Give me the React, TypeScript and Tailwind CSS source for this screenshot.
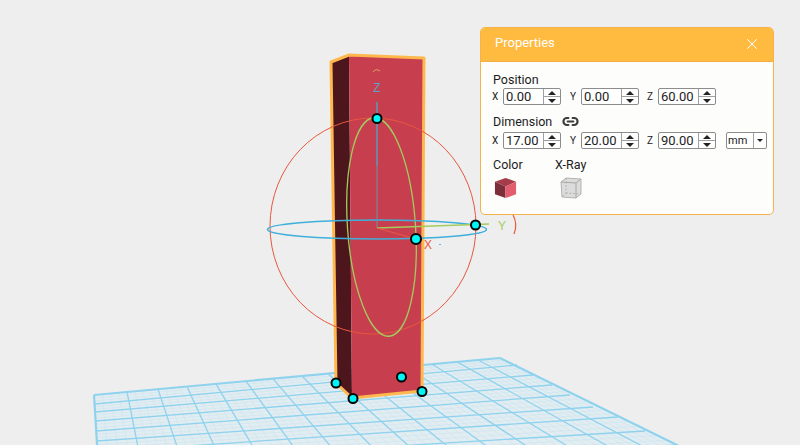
import { Link2, X } from "lucide-react";

// far edge of the build plate, one point per major column line
const topXs = [94, 127, 158, 187, 216, 246, 273, 302, 328, 354, 380, 406, 432, 457, 478, 500];
// [y on the left edge, x and y on the right edge]
const rows = [
  [395, 500, 358],
  [404, 517, 365],
  [412, 533, 375],
  [421, 552, 385],
  [431, 570, 395],
  [441, 593, 407],
  [452, 618, 417],
  [464, 645, 431],
  [477, 677, 445],
];

const vp = { x: 79, y: 151 };
const farY = (x: number) => 395 - ((x - 94) * 37) / 406;

function columnLine(x: number) {
  const y = farY(x);
  const endY = 470;
  const endX = vp.x + ((x - vp.x) * (endY - vp.y)) / (y - vp.y);
  return { x1: x, y1: y, x2: endX, y2: endY };
}

function leftX(y: number) {
  return 94 + (y - 395) * 0.06;
}

function BuildPlate() {
  const minorCols: number[] = [];
  topXs.slice(0, -1).forEach((x, i) => {
    for (let k = 1; k < 4; k++) minorCols.push(x + ((topXs[i + 1] - x) * k) / 4);
  });
  const minorRows: number[][] = [];
  rows.slice(0, -1).forEach((r, i) => {
    const n = rows[i + 1];
    for (let k = 1; k < 3; k++) {
      const t = k / 3;
      minorRows.push([r[0] + (n[0] - r[0]) * t, r[1] + (n[1] - r[1]) * t, r[2] + (n[2] - r[2]) * t]);
    }
  });
  return (
    <g>
      <polygon points="94,395 500,358 690,451 98,460" fill="#e2edf2" />
      {minorCols.map((x, i) => (
        <line key={i} {...columnLine(x)} stroke="#cde4ef" strokeWidth="0.6" />
      ))}
      {minorRows.map((r, i) => (
        <line key={i} x1={leftX(r[0])} y1={r[0]} x2={r[1]} y2={r[2]} stroke="#cde4ef" strokeWidth="0.6" />
      ))}
      {topXs.map((x, i) => (
        <line key={i} {...columnLine(x)} stroke="#8fd2ee" strokeWidth={i === 0 || i === topXs.length - 1 ? 2.2 : 1.3} />
      ))}
      {rows.map((r, i) => (
        <line key={i} x1={leftX(r[0])} y1={r[0]} x2={r[1]} y2={r[2]} stroke="#8fd2ee" strokeWidth={i === 0 ? 2.2 : 1.3} />
      ))}
    </g>
  );
}

function Handle({ x, y, r = 4.5 }: { x: number; y: number; r?: number }) {
  return <circle cx={x} cy={y} r={r} fill="#00f6f6" stroke="#050505" strokeWidth="2" />;
}

function Scene() {
  return (
    <svg className="absolute inset-0" width="800" height="445" viewBox="0 0 800 445">
      <BuildPlate />

      {/* selected box */}
      <polygon points="331,62 349,55 352,398 336,383" fill="#4d161d" />
      <polygon points="349,55 424,58 422,391 352,398" fill="#c73e4e" />
      <polygon
        points="331,62 349,55 424,58 422,391 352,398 336,383"
        fill="none"
        stroke="#ffb84d"
        strokeWidth="3"
        strokeLinejoin="round"
      />

      {/* rotate rings */}
      <ellipse cx="373" cy="226" rx="103" ry="108" fill="none" stroke="#e9573f" strokeWidth="1" />
      <ellipse cx="381.5" cy="227" rx="34" ry="109.5" transform="rotate(-4 381.5 227)" fill="none" stroke="#a3cc5c" strokeWidth="1.3" />
      <ellipse cx="377" cy="229.5" rx="109.5" ry="9.5" fill="none" stroke="#3fb0dc" strokeWidth="1.5" />

      {/* axes */}
      <line x1="377" y1="102" x2="377" y2="166" stroke="#3fb0dc" strokeWidth="1.2" />
      <line x1="377" y1="166" x2="377" y2="228" stroke="#6f8fa8" strokeWidth="1" />
      <line x1="377" y1="228" x2="489" y2="224" stroke="#a3cc5c" strokeWidth="1.3" />
      <line x1="377" y1="228" x2="416" y2="239" stroke="#e9573f" strokeWidth="1.2" />

      <text x="377" y="92" textAnchor="middle" fontFamily="Liberation Sans, sans-serif" fontSize="12" fill="#5aa3c9">Z</text>
      <text x="502" y="230" textAnchor="middle" fontFamily="Liberation Sans, sans-serif" fontSize="12" fill="#a3cc5c">Y</text>
      <text x="428" y="249" textAnchor="middle" fontFamily="Liberation Sans, sans-serif" fontSize="12" fill="#e9573f">X</text>
      <line x1="439" y1="244.5" x2="441" y2="244.5" stroke="#6fb5d6" strokeWidth="1" />
      <path d="M373 72 Q376 68 380 71" fill="none" stroke="#d9a468" strokeWidth="1" />
      <path d="M513 215 Q518 224 514 234" fill="none" stroke="#e9573f" strokeWidth="1.2" />

      <Handle x={377} y={118.5} />
      <Handle x={475.5} y={225} />
      <Handle x={416} y={239} r={5} />
      <Handle x={336} y={383} />
      <Handle x={353} y={398.5} />
      <Handle x={401.5} y={377} />
      <Handle x={422} y={391.5} />
    </svg>
  );
}

function SpinInput({ axis, value, gapLeft }: { axis: string; value: string; gapLeft: string }) {
  return (
    <div className={`flex items-center ${gapLeft}`}>
      <span className="w-[11px] text-[10px] text-[#222]">{axis}</span>
      <div className="flex h-[17px] w-[58px] rounded-[2px] border border-[#8c8c8c] bg-white">
        <span className="flex-1 pl-[2px] text-[13px] leading-[15px] text-[#222]">{value}</span>
        <div className="flex w-[17px] flex-col border-l border-[#a0a0a0]">
          <div className="flex flex-1 items-center justify-center border-b border-[#a0a0a0]">
            <div className="h-0 w-0 border-x-[4px] border-b-[4px] border-x-transparent border-b-[#222]" />
          </div>
          <div className="flex flex-1 items-center justify-center">
            <div className="h-0 w-0 border-x-[4px] border-t-[4px] border-x-transparent border-t-[#222]" />
          </div>
        </div>
      </div>
    </div>
  );
}

function ColorCube() {
  return (
    <svg width="23" height="23" viewBox="0 0 24 24">
      <polygon points="12,2 23,6 12,11 1,6" fill="#a63c4a" />
      <polygon points="1,6 12,11 12,23 1,19" fill="#7c2f3a" />
      <polygon points="12,11 23,6 23,19 12,23" fill="#e25e6e" />
    </svg>
  );
}

function XRayCube() {
  return (
    <svg width="24" height="24" viewBox="0 0 24 24">
      <polygon points="7,2 22,3 22,18 17,22 3,21 2,6" fill="#dcdcdc" stroke="#b4b4b4" strokeWidth="1" />
      <path d="M2 6 L17 7 L22 3 M17 7 L17 22" fill="none" stroke="#a8a8a8" strokeWidth="1" />
      <path d="M7 2 L7 17 L3 21 M7 17 L22 18" fill="none" stroke="#a8a8a8" strokeWidth="0.8" strokeDasharray="2 1.5" />
    </svg>
  );
}

function PropertiesPanel() {
  return (
    <div className="absolute left-[480px] top-[27px] flex h-[188px] w-[294px] flex-col overflow-hidden rounded-[5px] border border-[#f6b24a] bg-[#fdfdfb] font-['Roboto',sans-serif] text-[#1c1c1c]">
      <div className="flex h-[34px] items-center justify-between border-b border-[#f2ae48] bg-[#ffba40] pl-[14px] pr-[12px] text-white">
        <span className="mb-[4px] text-[13px] leading-none">Properties</span>
        <X size={18} strokeWidth={1.3} className="mb-[1px]" />
      </div>
      <div className="flex flex-1 flex-col pl-[11px] pt-[10px]">
        <div className="pl-[1px] text-[12.5px] leading-[15px]">Position</div>
        <div className="mt-[1px] flex items-center">
          <SpinInput axis="X" value="0.00" gapLeft="" />
          <SpinInput axis="Y" value="0.00" gapLeft="ml-[9px]" />
          <SpinInput axis="Z" value="60.00" gapLeft="ml-[8px]" />
        </div>
        <div className="mt-[8px] flex items-center pl-[1px] text-[12.5px] leading-[15px]">
          Dimension
          <Link2 size={17} strokeWidth={3} className="ml-[10px] text-[#3d3d3d]" />
        </div>
        <div className="mt-[2px] flex items-center">
          <SpinInput axis="X" value="17.00" gapLeft="" />
          <SpinInput axis="Y" value="20.00" gapLeft="ml-[9px]" />
          <SpinInput axis="Z" value="90.00" gapLeft="ml-[8px]" />
          <div className="ml-[10px] flex h-[17px] w-[41px] rounded-[2px] border border-[#8c8c8c] bg-white">
            <span className="flex-1 pl-[1px] text-[11px] leading-[15px]">mm</span>
            <div className="flex w-[13px] items-center justify-center border-l border-[#a0a0a0]">
              <div className="h-0 w-0 border-x-[3px] border-t-[3px] border-x-transparent border-t-[#222]" />
            </div>
          </div>
        </div>
        <div className="mt-[8px] flex pl-[1px]">
          <div className="flex w-[62px] flex-col gap-[4px]">
            <span className="text-[12.5px] leading-[15px]">Color</span>
            <div className="pl-[1px]">
              <ColorCube />
            </div>
          </div>
          <div className="flex flex-col gap-[4px]">
            <span className="text-[12.5px] leading-[15px]">X-Ray</span>
            <div className="pl-[4px]">
              <XRayCube />
            </div>
          </div>
        </div>
      </div>
    </div>
  );
}

export default function App() {
  return (
    <div className="relative h-[445px] w-[800px] overflow-hidden bg-[#eeeeee]">
      <Scene />
      <PropertiesPanel />
    </div>
  );
}
